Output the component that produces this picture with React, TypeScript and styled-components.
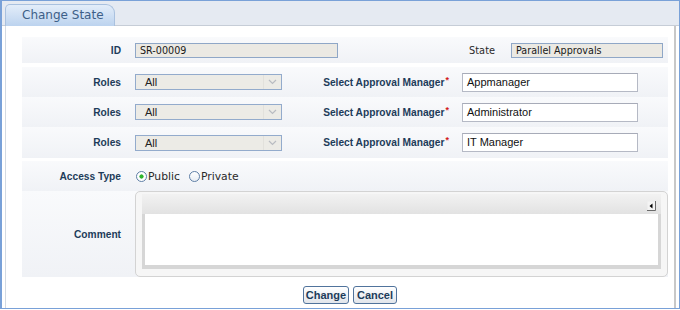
import styled, { createGlobalStyle } from "styled-components";

const GlobalStyle = createGlobalStyle`
  html, body {
    margin: 0;
    padding: 0;
    background: #ffffff;
  }
  body {
    font-family: "Liberation Sans", Arial, sans-serif;
  }
`;

function ChevronDown() {
  return (
    <svg width="9" height="6" viewBox="0 0 9 6">
      <path d="M1 1 L4.5 4.5 L8 1" fill="none" stroke="#b9bcc2" strokeWidth="1.2" />
    </svg>
  );
}

function CollapseIcon() {
  return (
    <svg width="9" height="10" viewBox="0 0 9 10">
      <rect x="0.5" y="0.5" width="8" height="9" fill="#f4f4f4" />
      <path d="M8.5 0 V9.5 H0" fill="none" stroke="#6b6b6b" strokeWidth="1" />
      <path d="M2.5 5 L5.5 2.5 V7.5 Z" fill="#000" />
    </svg>
  );
}

export default function App() {
  const managers = ["Appmanager", "Administrator", "IT Manager"];
  return (
    <>
      <GlobalStyle />
      <Frame>
        <Header>
          <Tab>Change State</Tab>
        </Header>
        <Content>
          <Form>
            <Row $h={26}>
              <Label>ID</Label>
              <ReadOnly $w={203}>SR-00009</ReadOnly>
              <SideLabel $w={157} $plain>
                State
              </SideLabel>
              <ReadOnly $w={152}>Parallel Approvals</ReadOnly>
            </Row>
            {managers.map((m, i) => (
              <Row key={m} $h={i === 2 ? 31 : 30} $top={i === 0 ? 4 : 0}>
                <Label>Roles</Label>
                <Select>
                  <span>All</span>
                  <Arrow>
                    <ChevronDown />
                  </Arrow>
                </Select>
                <SideLabel $w={167}>
                  Select Approval Manager<Required>*</Required>
                </SideLabel>
                <TextInput>{m}</TextInput>
              </Row>
            ))}
            <Row $h={30} $top={3}>
              <Label>Access Type</Label>
              <RadioGroup>
                <RadioOption>
                  <Radio $checked />
                  Public
                </RadioOption>
                <RadioOption>
                  <Radio />
                  Private
                </RadioOption>
              </RadioGroup>
            </Row>
            <Row $h={86}>
              <Label>Comment</Label>
              <Editor>
                <Toolbar>
                  <CollapseIcon />
                </Toolbar>
                <EditArea />
              </Editor>
            </Row>
          </Form>
          <Buttons>
            <Button $w={46}>Change</Button>
            <Button $w={44}>Cancel</Button>
          </Buttons>
        </Content>
      </Frame>
    </>
  );
}

const Frame = styled.div`
  box-sizing: border-box;
  width: 680px;
  height: 309px;
  border: 1px solid #79a1d8;
  border-left-width: 2px;
  background: #ffffff;
  display: flex;
  flex-direction: column;
`;

const Header = styled.div`
  height: 25px;
  flex: none;
  box-sizing: border-box;
  background: #e5eaf2;
  border-bottom: 1px solid #c6cdd7;
  padding: 3px 0 0 3px;
  display: flex;
  align-items: flex-end;
`;

const Tab = styled.div`
  box-sizing: border-box;
  width: 110px;
  height: 22px;
  margin-bottom: -1px;
  border: 1px solid #a9c1df;
  border-bottom: none;
  border-radius: 5px 9px 0 0;
  background: linear-gradient(to bottom, #e3edf9, #bcd3ef);
  padding: 3px 0 0 16px;
  font-family: "DejaVu Sans", Verdana, sans-serif;
  font-size: 12px;
  color: #3d5f88;
`;

const Content = styled.div`
  flex: 1;
  margin: 0 3px 0 3px;
  border-left: 1px solid #d4dae2;
  border-right: 2px solid #c8c8c8;
  background: #ffffff;
  padding: 11px 5px 0 16px;
  display: flex;
  flex-direction: column;
`;

const Form = styled.div`
  width: 646px;
  display: flex;
  flex-direction: column;
`;

const Row = styled.div<{ $h: number; $top?: number }>`
  height: ${(p) => p.$h}px;
  margin-top: ${(p) => p.$top ?? 0}px;
  display: flex;
  align-items: center;
  background: linear-gradient(to bottom, #f9fafc, #f0f2f6);
`;

const Label = styled.div`
  width: 99px;
  margin-right: 14px;
  flex: none;
  text-align: right;
  font-size: 10.2px;
  font-weight: bold;
  color: #1d3c5a;
`;

const SideLabel = styled.div<{ $w: number; $plain?: boolean }>`
  width: ${(p) => p.$w}px;
  margin-right: 13px;
  flex: none;
  text-align: right;
  white-space: nowrap;
  font-family: ${(p) =>
    p.$plain ? `"DejaVu Sans", Verdana, sans-serif` : `"Liberation Sans", Arial, sans-serif`};
  font-size: ${(p) => (p.$plain ? "9.8px" : "10.2px")};
  font-weight: ${(p) => (p.$plain ? "normal" : "bold")};
  color: ${(p) => (p.$plain ? "#2a2a2a" : "#1d3c5a")};
  padding-right: ${(p) => (p.$plain ? "3px" : "0")};
`;

const Required = styled.span`
  color: #d21c1c;
  font-size: 9px;
  position: relative;
  top: -3px;
  margin-left: 1px;
`;

const ReadOnly = styled.div<{ $w: number }>`
  box-sizing: border-box;
  width: ${(p) => p.$w}px;
  height: 15px;
  flex: none;
  border: 1px solid #8fa7c7;
  background: #ebe9e3;
  padding: 0 4px;
  font-family: "DejaVu Sans", Verdana, sans-serif;
  font-size: 9.6px;
  line-height: 13px;
  color: #1a1a1a;
`;

const Select = styled.div`
  box-sizing: border-box;
  width: 147px;
  height: 16px;
  flex: none;
  border: 1px solid #93abcc;
  background: #ecebe6;
  padding: 0 0 0 9px;
  display: flex;
  align-items: center;
  justify-content: space-between;
  font-size: 11px;
  color: #222;
`;

const Arrow = styled.span`
  width: 17px;
  height: 100%;
  display: flex;
  align-items: center;
  justify-content: center;
  border-left: 1px solid #e2e1dc;
`;

const TextInput = styled.div`
  box-sizing: border-box;
  width: 176px;
  height: 19px;
  flex: none;
  border: 1px solid #b5b9c5;
  border-top-color: #a7abb8;
  background: #ffffff;
  padding: 0 4px;
  font-size: 11px;
  line-height: 17px;
  color: #111;
`;

const RadioGroup = styled.div`
  display: flex;
  align-items: center;
  gap: 9px;
  margin-left: 1px;
`;

const RadioOption = styled.label`
  display: flex;
  align-items: center;
  font-family: "DejaVu Sans", Verdana, sans-serif;
  font-size: 10.8px;
  color: #2a2a2a;
`;

const Radio = styled.span<{ $checked?: boolean }>`
  box-sizing: border-box;
  width: 11px;
  height: 11px;
  margin-right: 1px;
  border-radius: 50%;
  border: 1px solid #5f7fa6;
  background: ${(p) =>
    p.$checked
      ? "radial-gradient(circle, #2fb52f 0 1.8px, #ffffff 2.4px)"
      : "linear-gradient(to bottom, #ffffff, #e8edf3)"};
`;

const Editor = styled.div`
  box-sizing: border-box;
  width: 533px;
  height: 86px;
  flex: none;
  border: 1px solid #d3d3d3;
  border-radius: 5px;
  background: #f6f6f6;
  padding: 2px 6px 7px 6px;
  display: flex;
  flex-direction: column;
`;

const Toolbar = styled.div`
  height: 20px;
  flex: none;
  background: linear-gradient(to bottom, #f2f2f2, #e2e2e2);
  display: flex;
  align-items: flex-end;
  justify-content: flex-end;
  padding: 0 5px 3px 0;
  box-sizing: border-box;
`;

const EditArea = styled.div`
  flex: 1;
  background: #ffffff;
  border: 3px solid #d6d6d6;
  border-top: none;
  border-bottom-width: 4px;
`;

const Buttons = styled.div`
  display: flex;
  justify-content: center;
  gap: 4px;
  margin-top: 9px;
  padding-left: 9px;
`;

const Button = styled.button<{ $w: number }>`
  box-sizing: border-box;
  width: ${(p) => p.$w}px;
  height: 18px;
  padding: 0;
  border: 1px solid #50739c;
  border-radius: 3px;
  background: linear-gradient(to bottom, #ffffff, #e1e5eb);
  font-family: "Liberation Sans", Arial, sans-serif;
  font-size: 11px;
  font-weight: bold;
  color: #1d3c5a;
  cursor: pointer;
`;
